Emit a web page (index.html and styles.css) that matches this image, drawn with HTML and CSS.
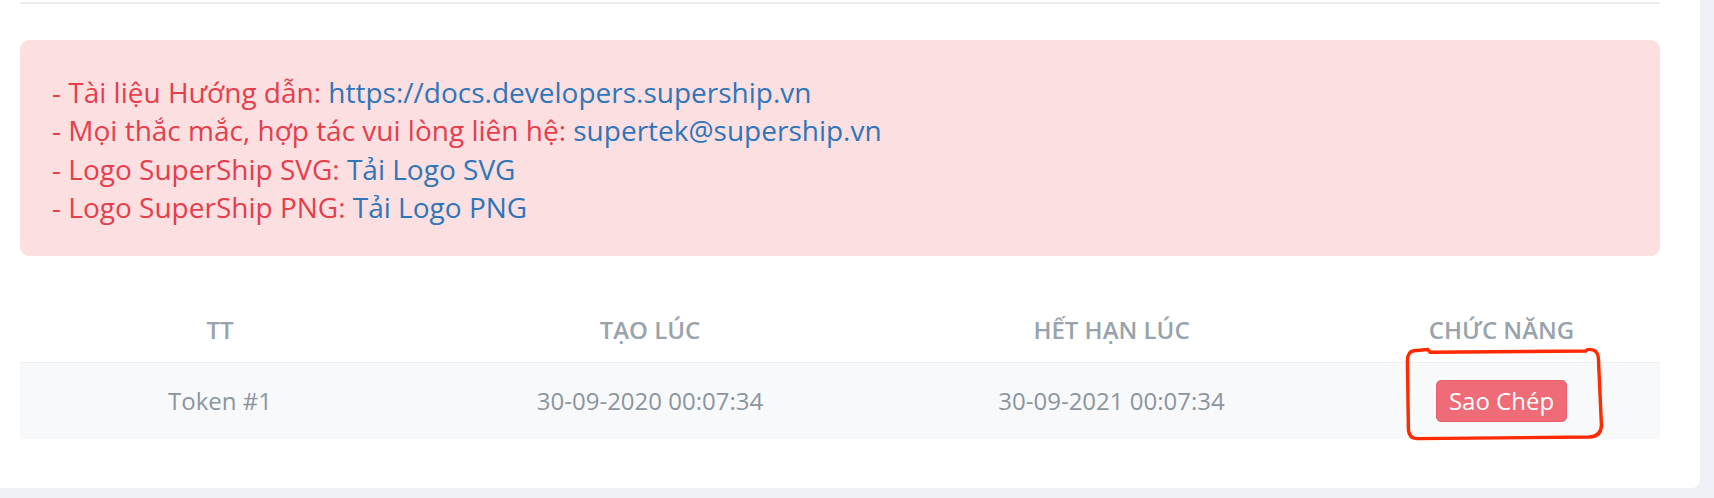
FILE: index.html
```html
<!DOCTYPE html>
<html lang="vi">
<head>
<meta charset="utf-8">
<title>SuperShip Token</title>
<link rel="stylesheet" href="styles.css">
</head>
<body>
<div class="card">
  <div class="rule"></div>
  <div class="alert">
    <div>- Tài liệu Hướng dẫn: <a class="link" href="#">https://docs.developers.supership.vn</a></div>
    <div>- Mọi thắc mắc, hợp tác vui lòng liên hệ: <a class="link" href="#">supertek@supership.vn</a></div>
    <div>- Logo SuperShip SVG: <a class="link" href="#">Tải Logo SVG</a></div>
    <div>- Logo SuperShip PNG: <a class="link" href="#">Tải Logo PNG</a></div>
  </div>
  <table class="tokens">
    <colgroup>
      <col class="c1"><col class="c2"><col class="c3"><col class="c4">
    </colgroup>
    <thead>
      <tr><th>TT</th><th>TẠO LÚC</th><th>HẾT HẠN LÚC</th><th>CHỨC NĂNG</th></tr>
    </thead>
    <tbody>
      <tr>
        <td>Token #1</td>
        <td>30-09-2020 00:07:34</td>
        <td>30-09-2021 00:07:34</td>
        <td><button class="btn-copy" type="button">Sao Chép</button></td>
      </tr>
    </tbody>
  </table>
  <svg class="mark" width="220" height="110" viewBox="0 0 220 110" aria-hidden="true">
    <path d="M28 9.5 L14 10.8 Q7.4 11.6 7.4 21 L8.4 89 Q8.8 98.6 17.5 98.6 L189 97 Q201.6 96.4 201.4 85 L198.4 18 Q197.8 9.2 189 9.4 Q187 9.4 186 11 L30 12.2 L28 9.5" fill="none" stroke="#ff2a00" stroke-width="3.4" stroke-linecap="round" stroke-linejoin="round"/>
  </svg>
</div>
</body>
</html>
```

FILE: styles.css
```css
html, body {
  margin: 0;
  padding: 0;
}
body {
  background: #edf0f5;
  font-family: "Open Sans", "Liberation Sans", sans-serif;
  width: 1714px;
  height: 498px;
  overflow: hidden;
}
.card {
  position: relative;
  width: 1700px;
  height: 488px;
  box-sizing: border-box;
  background: #ffffff;
  border-radius: 0 0 8px 0;
  padding: 2px 40px 0 20px;
}
.rule {
  height: 2px;
  background: #ececee;
}
.alert {
  margin-top: 36px;
  background: #fcdfe1;
  border-radius: 9px;
  padding: 33px 32px 29px 32px;
  color: #e53e4c;
  font-size: 28px;
  line-height: 38.4px;
}
.link {
  color: #2f76b8;
  text-decoration: none;
}
.tokens {
  margin-top: 44px;
  width: 1640px;
  table-layout: fixed;
  border-collapse: collapse;
  font-size: 24px;
  line-height: 36px;
}
.c1 { width: 400px; }
.c2 { width: 460px; }
.c3 { width: 463px; }
.c4 { width: 317px; }
.tokens th {
  padding: 12px 0 14px;
  color: #98a3ab;
  font-weight: 600;
  text-align: center;
}
.tokens td {
  padding: 17px 0;
  text-align: center;
  vertical-align: middle;
  color: #8b959e;
  background: #f8f9fb;
  border-top: 1px solid #eef0f4;
}
.btn-copy {
  font-family: "Open Sans", "Liberation Sans", sans-serif;
  font-size: 24px;
  line-height: 36px;
  padding: 2px 12px;
  border: 1px solid #e95f6c;
  border-radius: 5px;
  background: #ee6b77;
  color: #ffffff;
  display: inline-block;
  vertical-align: middle;
}
.mark {
  position: absolute;
  left: 1400px;
  top: 340px;
  pointer-events: none;
}
```
